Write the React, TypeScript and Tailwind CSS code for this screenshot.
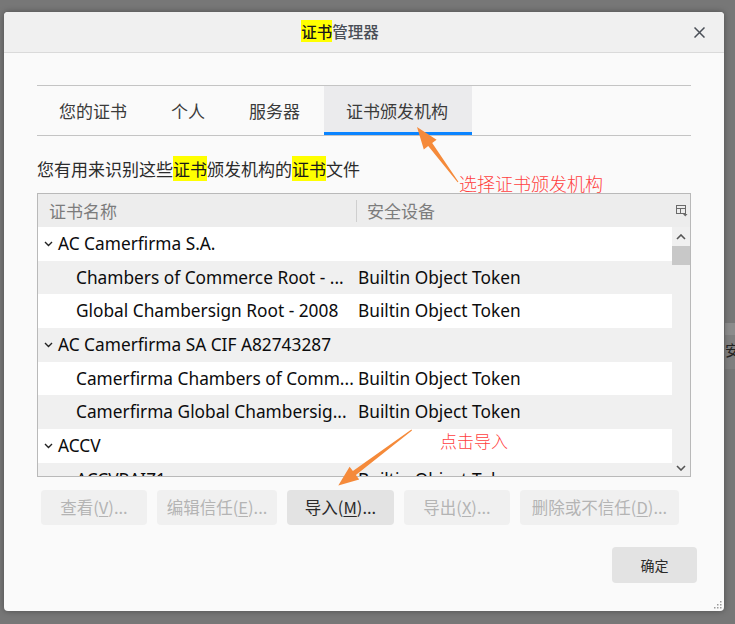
import React from 'react';

const sans = { fontFamily: '"Noto Sans", "Noto Sans CJK SC", sans-serif' };
const cjk = { fontFamily: '"Noto Sans CJK SC", "Noto Sans", sans-serif' };

type Row = { name: string; device?: string; parent?: boolean };

const rows: Row[] = [
    { name: 'AC Camerfirma S.A.', parent: true },
    { name: 'Chambers of Commerce Root - ...', device: 'Builtin Object Token' },
    { name: 'Global Chambersign Root - 2008', device: 'Builtin Object Token' },
    { name: 'AC Camerfirma SA CIF A82743287', parent: true },
    { name: 'Camerfirma Chambers of Comm...', device: 'Builtin Object Token' },
    { name: 'Camerfirma Global Chambersig...', device: 'Builtin Object Token' },
    { name: 'ACCV', parent: true },
    { name: 'ACCVRAIZ1', device: 'Builtin Object Token' },
];

const tabs = ['您的证书', '个人', '服务器', '证书颁发机构'];

const Hl = ({ children }: { children: React.ReactNode }) => (
    <span className="bg-[#ffff00] text-[#1a1a1a]">{children}</span>
);

const Btn = ({ label, key2, tail, enabled, w }: { label: string; key2: string; tail: string; enabled?: boolean; w: string }) => (
    <div
        className={`${w} h-[35px] rounded-[4px] flex items-center justify-center text-[16.5px] ${enabled ? 'bg-[#e3e3e3] text-[#2a2a2a]' : 'bg-[#f0f0f0] text-[#b4b4b4]'}`}
        style={cjk}
    >
        {label}(<span className="underline underline-offset-2">{key2}</span>){tail}
    </div>
);

const Chevron = () => (
    <svg width="9" height="6" viewBox="0 0 9 6" className="mr-[5px]">
        <path d="M1 1 L4.5 4.5 L8 1" fill="none" stroke="#222" strokeWidth="1.4" />
    </svg>
);

const App = () => {
    return (
        <div className="relative w-[735px] h-[624px] bg-[#777777] overflow-hidden pt-[12px] pl-[4px]">
            {/* window behind, peeking at right */}
            <div className="absolute left-[725px] top-[323px] w-[20px] h-[12px] bg-[#8c8c8c]" />
            <div className="absolute left-[725px] top-[335px] w-[20px] h-[34px] bg-[#7f7f7f] text-[15px] text-[#222] pt-[4px]" style={cjk}>安</div>

            <div className="w-[720px] h-[599px] rounded-[4px] bg-[#fafafa] shadow-[0_0_6px_rgba(0,0,0,0.35)] flex flex-col overflow-hidden relative">
                {/* title bar */}
                <div className="h-[41px] shrink-0 bg-[#f0f0f0] border-b border-[#dadada] flex items-center justify-center pr-[48px] relative">
                    <span className="text-[15.5px] font-medium text-[#4a4f57]" style={cjk}>
                        <Hl>证书</Hl>管理器
                    </span>
                    <svg className="absolute right-[19px] top-[15px]" width="11" height="11" viewBox="0 0 11 11">
                        <path d="M0.5 0.5 L10.5 10.5 M10.5 0.5 L0.5 10.5" stroke="#4a4f57" strokeWidth="1.5" />
                    </svg>
                </div>

                <div className="flex-1 flex flex-col pl-[33px] pr-[33px] pt-[32px]">
                    {/* tabs */}
                    <div className="h-[51px] border-t border-b border-[#c4c4c4] flex">
                        {tabs.map((t, i) => (
                            <div
                                key={t}
                                className={`px-[22px] flex items-center relative text-[17px] text-[#3b3b3b] ${i === 3 ? 'bg-[#ebebed] ml-[2px] pr-[24px]' : ''}`}
                                style={cjk}
                            >
                                {t}
                                {i === 3 && <div className="absolute left-0 right-0 bottom-0 h-[3px] bg-[#0a84ff]" />}
                            </div>
                        ))}
                    </div>

                    <div className="mt-[21px] text-[17px] text-[#2b2b2b] leading-[24px]" style={cjk}>
                        您有用来识别这些<Hl>证书</Hl>颁发机构的<Hl>证书</Hl>文件
                    </div>

                    {/* tree */}
                    <div className="mt-[12px] h-[284px] border border-[#b9b9b9] bg-white flex flex-col overflow-hidden">
                        <div className="h-[33px] shrink-0 bg-[#ededed] flex items-center text-[17px] text-[#7c7c7c]" style={cjk}>
                            <div className="w-[318px] pl-[11px]">证书名称</div>
                            <div className="w-px h-[22px] bg-[#cfcfcf]" />
                            <div className="flex-1 pl-[10px]">安全设备</div>
                            <svg width="12" height="12" viewBox="0 0 12 12" className="mr-[2px]">
                                <rect x="0.5" y="0.5" width="9" height="8" fill="none" stroke="#6a6a6a" />
                                <path d="M0.5 3.5 H9.5 M4.5 3.5 V8.5" stroke="#6a6a6a" />
                                <path d="M7 9 L11.5 9 L9.25 11.5 Z" fill="#6a6a6a" />
                            </svg>
                        </div>
                        <div className="flex-1 flex overflow-hidden">
                            <div className="flex-1 flex flex-col">
                                {rows.map((r, i) => (
                                    <div
                                        key={r.name}
                                        className={`h-[33.7px] shrink-0 flex items-center text-[17.3px] text-[#0c0c0d] ${i % 2 === 1 ? 'bg-[#f0f0f0]' : 'bg-white'}`}
                                        style={sans}
                                    >
                                        {r.parent ? (
                                            <div className="pl-[6px] flex items-center whitespace-nowrap">
                                                <Chevron />
                                                {r.name}
                                            </div>
                                        ) : (
                                            <>
                                                <div className="w-[320px] pl-[38px] whitespace-nowrap">{r.name}</div>
                                                <div className="whitespace-nowrap">{r.device}</div>
                                            </>
                                        )}
                                    </div>
                                ))}
                            </div>
                            <div className="w-[18px] shrink-0 bg-[#f0f0f0] flex flex-col items-center">
                                <svg width="10" height="6" viewBox="0 0 10 6" className="mt-[7px]">
                                    <path d="M1 5 L5 1 L9 5" fill="none" stroke="#555" strokeWidth="1.6" />
                                </svg>
                                <div className="mt-[6px] w-[18px] h-[19px] bg-[#c8c8c8]" />
                                <div className="flex-1" />
                                <svg width="10" height="6" viewBox="0 0 10 6" className="mb-[5px]">
                                    <path d="M1 1 L5 5 L9 1" fill="none" stroke="#555" strokeWidth="1.6" />
                                </svg>
                            </div>
                        </div>
                    </div>

                    {/* buttons */}
                    <div className="mt-[13px] pl-[4px] flex gap-[10px]">
                        <Btn label="查看" key2="V" tail="..." w="w-[106px]" />
                        <Btn label="编辑信任" key2="E" tail="..." w="w-[120px]" />
                        <Btn label="导入" key2="M" tail="..." w="w-[107px]" enabled />
                        <Btn label="导出" key2="X" tail="..." w="w-[106px]" />
                        <Btn label="删除或不信任" key2="D" tail="..." w="w-[159px]" />
                    </div>

                    <div className="mt-[22px] flex justify-end mr-[-6px]">
                        <div className="w-[85px] h-[36px] rounded-[4px] bg-[#e3e3e3] flex items-center justify-center text-[14px] text-[#2a2a2a]" style={cjk}>
                            确定
                        </div>
                    </div>
                </div>

                {/* resize grip */}
                <svg className="absolute right-[2px] bottom-[2px]" width="9" height="9" viewBox="0 0 9 9">
                    {[[7, 1], [4, 4], [7, 4], [1, 7], [4, 7], [7, 7]].map(([x, y], i) => (
                        <rect key={i} x={x} y={y} width="1.5" height="1.5" fill="#9a9a9a" />
                    ))}
                </svg>
            </div>

            {/* annotations */}
            <svg className="absolute inset-0 pointer-events-none" width="735" height="624" viewBox="0 0 735 624">
                <polygon
                    points="417,127 436.6,139.8 432.2,143.1 458.4,181.7 457.6,182.3 428.2,146.1 423.8,149.4"
                    fill="#f58a3a"
                />
                <polygon
                    points="338.3,485.5 359.2,479.5 355.9,475.1 412,430.4 411.4,429.6 352.9,471.1 349.6,466.7"
                    fill="#f58a3a"
                />
            </svg>
            <div className="absolute left-[459px] top-[171px] text-[18px] leading-[24px] font-light text-[#ff4040]" style={cjk}>
                选择证书颁发机构
            </div>
            <div className="absolute left-[440px] top-[429px] text-[17px] leading-[24px] font-light text-[#ff4040]" style={cjk}>
                点击导入
            </div>
        </div>
    );
};

export default App;
